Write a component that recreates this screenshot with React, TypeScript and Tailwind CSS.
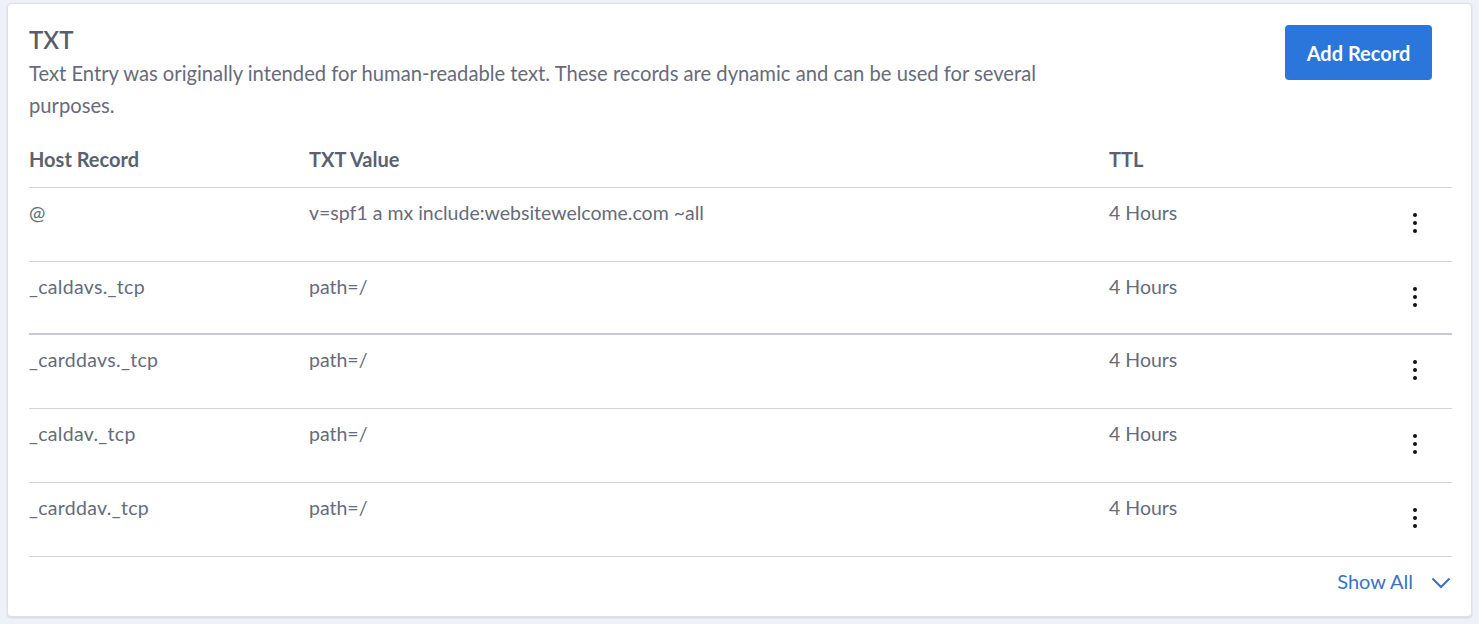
import React from "react";

const rows = [
  { host: "@", value: "v=spf1 a mx include:websitewelcome.com ~all", ttl: "4 Hours" },
  { host: "_caldavs._tcp", value: "path=/", ttl: "4 Hours" },
  { host: "_carddavs._tcp", value: "path=/", ttl: "4 Hours" },
  { host: "_caldav._tcp", value: "path=/", ttl: "4 Hours" },
  { host: "_carddav._tcp", value: "path=/", ttl: "4 Hours" },
];

function Dots() {
  return (
    <svg width="6" height="22" viewBox="0 0 6 22" className="block">
      <circle cx="3" cy="3" r="2" fill="#111" />
      <circle cx="3" cy="11" r="2" fill="#111" />
      <circle cx="3" cy="19" r="2" fill="#111" />
    </svg>
  );
}

export default function App() {
  return (
    <div
      className="w-[1479px] h-[624px] bg-[#eef1f7] pt-[3px] pl-[7px] overflow-hidden"
      style={{ fontFamily: "Lato, 'Noto Sans', sans-serif" }}
    >
      <div className="w-[1465px] h-[614px] bg-white border border-[#dde0e6] rounded-[4px] shadow-[0_1px_2px_rgba(0,0,0,0.12)] pl-[21px] pr-[19px] pt-[20px]">
        <div className="flex justify-between">
          <div>
            <h2 className="text-[24px] leading-[32px] font-semibold text-[#565d6c]">TXT</h2>
            <p className="text-[20.2px] leading-[32px] text-[#676b7b] w-[1040px] mt-[1px]">
              Text Entry was originally intended for human-readable text. These records are dynamic and can be used for several purposes.
            </p>
          </div>
          <button className="mt-[1px] mr-[20px] w-[147px] h-[55px] rounded-[4px] bg-[#2b76db] text-white text-[20px] font-bold">
            Add Record
          </button>
        </div>
        <div className="mt-[11px]">
          <div className="flex h-[56px] items-center pb-[2px] border-b border-[#d3d4d8] text-[20px] font-bold text-[#5a6170]">
            <div className="w-[280px]">Host Record</div>
            <div className="w-[800px]">TXT Value</div>
            <div>TTL</div>
          </div>
          {rows.map((r, i) => (
            <div
              key={i}
              className={
                "flex text-[19.5px] leading-[24px] text-[#676b7b] " +
                (i === 1 ? "h-[73px] border-b-2 border-[#c6cad3]" : "h-[74px] border-b border-[#d3d4d8]")
              }
            >
              <div className="w-[280px] pt-[13px] tracking-[0.3px]">{r.host}</div>
              <div className="w-[800px] pt-[13px]">{r.value}</div>
              <div className="w-[290px] pt-[13px]">{r.ttl}</div>
              <div className="pt-[24px] pl-[13px]">
                <Dots />
              </div>
            </div>
          ))}
          <div className="flex justify-end items-center h-[48px] pr-[1px]">
            <span className="text-[20px] text-[#3b73c4]">Show All</span>
            <svg width="20" height="12" viewBox="0 0 20 12" className="ml-[18px] mt-[4px]">
              <path d="M1.5 1.5 L10 10 L18.5 1.5" fill="none" stroke="#3b6fc2" strokeWidth="2" />
            </svg>
          </div>
        </div>
      </div>
    </div>
  );
}
